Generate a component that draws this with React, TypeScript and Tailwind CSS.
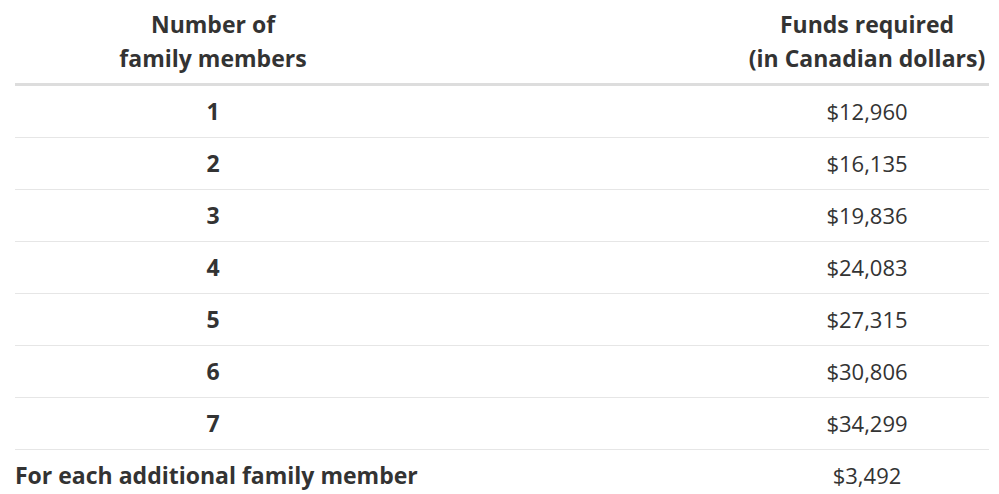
import React from "react";

const rows = [
  ["1", "$12,960"],
  ["2", "$16,135"],
  ["3", "$19,836"],
  ["4", "$24,083"],
  ["5", "$27,315"],
  ["6", "$30,806"],
  ["7", "$34,299"],
];

export default function App() {
  return (
    <div
      className="w-[999px] h-[494px] overflow-hidden bg-white pl-[15px] pr-[10px] text-[#333333]"
      style={{ fontFamily: '"Open Sans", "Liberation Sans", sans-serif' }}
    >
      <div className="grid grid-cols-[396px_1fr_244px] pt-[7px] pb-[8px] border-b-[3px] border-[#dddddd] text-[23px] leading-[34px] font-bold">
        <div className="text-center">
          Number of
          <br />
          family members
        </div>
        <div />
        <div className="text-center whitespace-nowrap">
          Funds required
          <br />
          (in Canadian dollars)
        </div>
      </div>
      {rows.map(([n, v]) => (
        <div
          key={n}
          className="grid grid-cols-[396px_1fr_244px] h-[52px] items-center border-b border-[#e6e6e6] text-[22px]"
        >
          <div className="text-center font-bold text-[23px]">{n}</div>
          <div />
          <div className="text-center">{v}</div>
        </div>
      ))}
      <div className="grid grid-cols-[396px_1fr_244px] h-[50px] items-center text-[22px]">
        <div className="col-span-2 font-bold text-[23px] whitespace-nowrap">For each additional family member</div>
        <div className="text-center">$3,492</div>
      </div>
    </div>
  );
}
